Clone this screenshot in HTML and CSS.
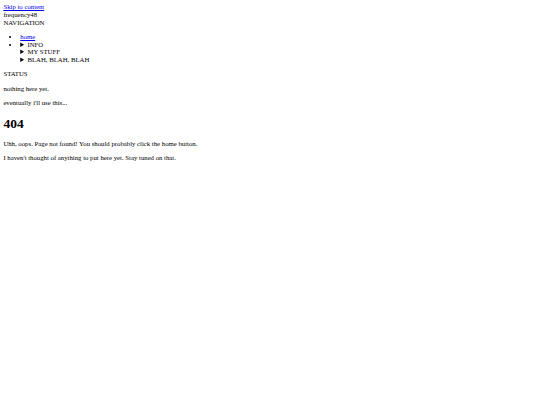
FILE: index.html
```html
<!DOCTYPE html>
<html lang="en">
<head>
<meta charset="utf-8">
<title>404 - frequency48</title>
<link rel="stylesheet" href="styles.css">
</head>
<body>
<a class="skip" href="#content">Skip to content</a>
<div class="site-title">frequency48</div>
<nav class="nav">
  <div class="nav-title">NAVIGATION</div>
  <ul class="nav-list">
    <li><a href="#">home</a></li>
    <li>
      <details><summary>INFO</summary></details>
      <details><summary>MY STUFF</summary></details>
      <details><summary>BLAH, BLAH, BLAH</summary></details>
    </li>
  </ul>
</nav>
<aside class="status">
  <div class="status-title">STATUS</div>
  <p>nothing here yet.</p>
  <p>eventually i'll use this...</p>
</aside>
<main id="content" class="content">
  <h1>404</h1>
  <p>Uhh, oops. Page not found! You should probably click the home button.</p>
  <p>I haven't thought of anything to put here yet. Stay tuned on that.</p>
</main>
</body>
</html>
```
FILE: styles.css
```css
body {
  margin: 3.375px;
  font-family: "Liberation Serif", "Times New Roman", serif;
  font-size: 6.75px;
  line-height: 1.13;
  color: #000;
  background: #fff;
}
.skip {
  color: #0000ee;
}
.nav-list {
  padding-left: 16.875px;
}
.nav-list a {
  color: #0000ee;
}
```
